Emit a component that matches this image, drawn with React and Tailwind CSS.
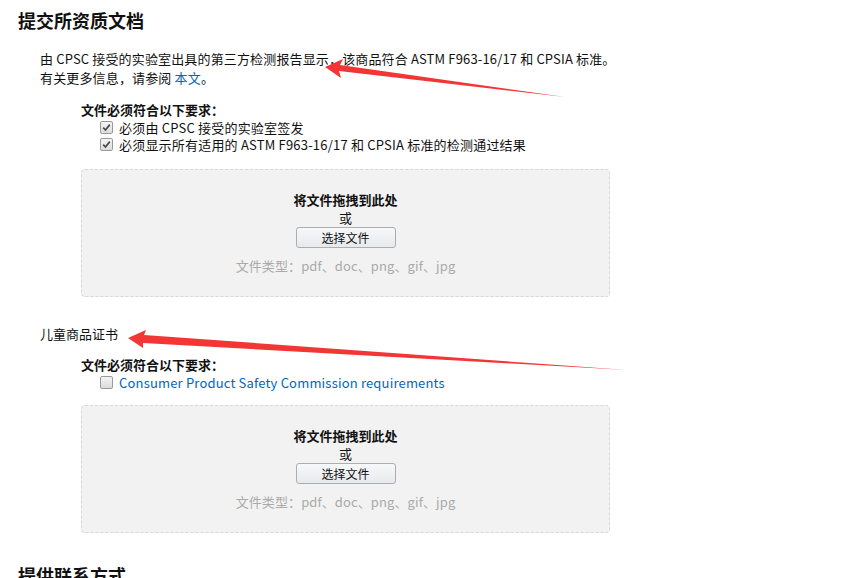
import React from "react";

const FONT = { fontFamily: '"Noto Sans CJK SC", "Noto Sans", sans-serif' };

function Check({ checked }) {
  return (
    <span className="inline-flex w-[13px] h-[13px] shrink-0 items-center justify-center rounded-[2px] border border-[#9a9a9a] bg-gradient-to-b from-[#f4f4f4] to-[#dcdcdc]">
      {checked && (
        <svg width="9" height="9" viewBox="0 0 9 9">
          <path d="M1.2 4.6 L3.5 7 L7.8 1.6" fill="none" stroke="#4a4a4a" strokeWidth="1.7" />
        </svg>
      )}
    </span>
  );
}

function DropZone() {
  return (
    <div className="w-[529px] h-[128px] rounded-[4px] border border-dashed border-[#d8d8d8] bg-[#f2f2f2] flex flex-col items-center pt-[21px]">
      <div className="text-[13px] leading-[18px] font-bold text-[#111]">将文件拖拽到此处</div>
      <div className="text-[13px] leading-[18px] text-[#111]">或</div>
      <button className="w-[100px] h-[21px] rounded-[3px] border border-[#adadad] bg-gradient-to-b from-[#f7f8fa] to-[#e7e9ec] text-[12px] leading-[19px] text-[#111]">
        选择文件
      </button>
      <div className="mt-[9px] text-[13px] leading-[18px] tracking-[0.1px] text-[#aaaaaa]">文件类型：pdf、doc、png、gif、jpg</div>
    </div>
  );
}

export default function App() {
  return (
    <div className="relative w-[842px] h-[578px] overflow-hidden bg-white text-[#111]" style={FONT}>
      <div className="pl-[18px]">
        <h1 className="mt-[8px] text-[18px] leading-[24px] font-bold">提交所资质文档</h1>
        <div className="pl-[22px]">
          <p className="mt-[17px] text-[13px] leading-[19px] tracking-[0.15px] text-[#111]">
            由 CPSC 接受的实验室出具的第三方检测报告显示，该商品符合 ASTM F963-16/17 和 CPSIA 标准。
            <br />
            有关更多信息，请参阅 <span className="text-[#0066c0]">本文</span>。
          </p>
          <div className="ml-[41px] mt-[14px]">
            <div className="text-[13px] leading-[18px] font-bold">文件必须符合以下要求：</div>
            <div className="pl-[19px] text-[13px] leading-[17px] tracking-[0.2px]">
              <div className="flex items-center gap-[6px]"><Check checked /><span>必须由 CPSC 接受的实验室签发</span></div>
              <div className="flex items-center gap-[6px]"><Check checked /><span>必须显示所有适用的 ASTM F963-16/17 和 CPSIA 标准的检测通过结果</span></div>
            </div>
            <div className="mt-[16px]"><DropZone /></div>
          </div>

          <div className="mt-[27px] text-[13px] leading-[19px]">儿童商品证书</div>
          <div className="ml-[41px] mt-[13px]">
            <div className="text-[13px] leading-[18px] font-bold">文件必须符合以下要求：</div>
            <div className="pl-[19px] text-[13px] leading-[17px] tracking-[0.18px]">
              <div className="flex items-center gap-[6px]"><Check /><span className="text-[#0066c0]">Consumer Product Safety Commission requirements</span></div>
            </div>
            <div className="mt-[14px]"><DropZone /></div>
          </div>
        </div>
        <h2 className="mt-[30px] text-[18px] leading-[24px] font-bold">提供联系方式</h2>
      </div>

      <svg className="absolute left-0 top-0 pointer-events-none" width="842" height="578">
        <polygon points="325,67 343,59 340,65 565,97 339,71 341,78" fill="#f23535" />
        <polygon points="128,338 146,330 144,335 627,370 143,343 143,348" fill="#f23535" />
      </svg>
    </div>
  );
}
